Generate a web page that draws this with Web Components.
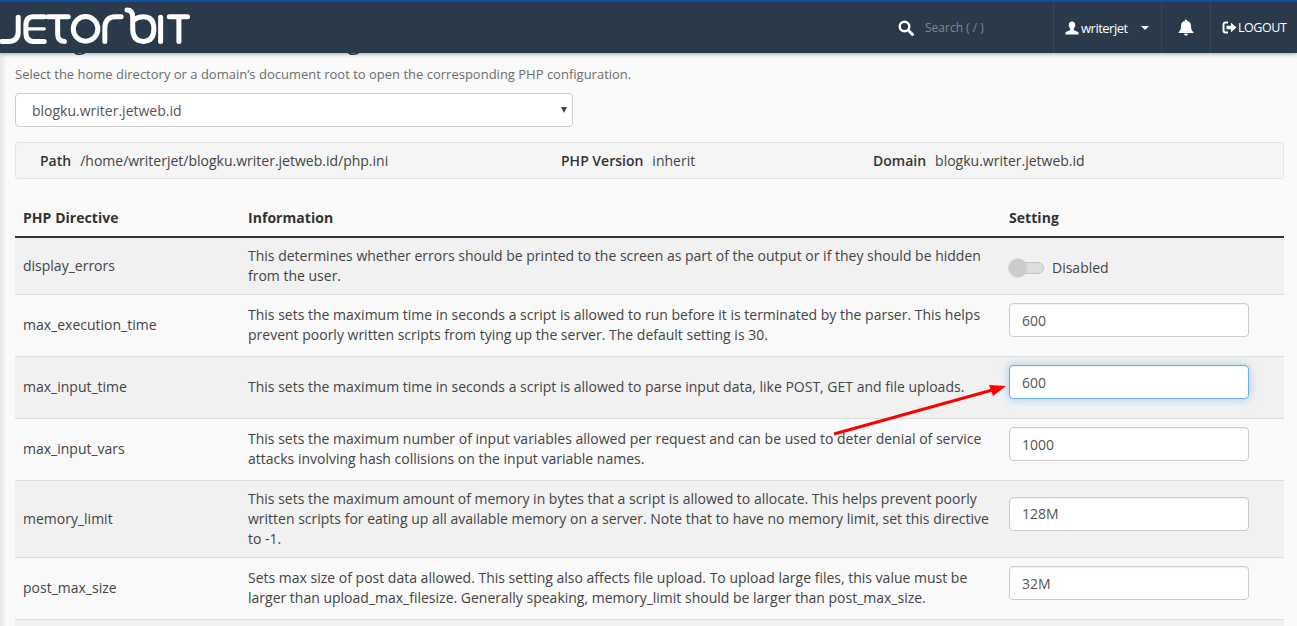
<!DOCTYPE html>
<html lang="en">
<head>
<meta charset="utf-8">
<title>MultiPHP INI Editor</title>
<style>
  html, body { margin: 0; height: 100%; overflow: hidden; }
  body { background: #fafafa; color: #333; font: 14px/20px "Open Sans", "Liberation Sans", sans-serif; }
</style>
</head>
<body>
<template id="jet-header-tpl">
  <style>
    :host {
      display: flex;
      position: relative;
      z-index: 5;
      height: 51px;
      background: #2a3a4b;
      border-top: 2px solid #0c4ea3;
      box-shadow: 0 1px 4px rgba(0, 0, 0, .35);
      color: #fff;
      font-size: 13px;
      align-items: stretch;
    }
    .logo { width: 200px; height: 51px; flex: none; margin-top: -2px; }
    .logo path, .logo circle { fill: none; stroke: #fff; stroke-width: 5.2; stroke-linecap: round; }
    .logo .thin { stroke-width: 3.6; }
    .search { margin-left: auto; width: 155px; display: flex; align-items: center; }
    .search span { margin-left: 11px; font-size: 12px; color: #7d8995; }
    .cell { display: flex; align-items: center; border-left: 1px solid #34465a; }
    .user { width: 108px; padding-left: 11px; box-sizing: border-box; letter-spacing: -.5px; }
    .user span { margin-left: 2px; }
    .caret { width: 0; height: 0; margin-left: 13px; border: 4.500px solid transparent; border-top-color: #fff; border-bottom: 0; }
    .bell { width: 48px; justify-content: center; }
    .logout { width: 87px; padding-left: 11px; box-sizing: border-box; font-size: 12.5px; letter-spacing: -.45px; }
    .logout span { margin-left: 1px; }
  </style>
  <svg class="logo" viewBox="0 0 200 53">
    <path d="M15 18V33Q15 43 5 43H-2"/>
    <path d="M42 17.500H31Q23 17.500 23 26V34Q23 43 31 43H42"/>
    <path class="thin" d="M25 30H42"/>
    <path d="M46 17.500H67M56 18V35Q56 43 63 43"/>
    <circle cx="85" cy="30" r="12.800"/>
    <path d="M105 43V29Q105 17.500 116 17.500H122"/>
    <path d="M128 10.500Q134 10.500 134 18V30Q134 43 145 43Q156 43 156 30Q156 17.500 145 17.500Q139 17.500 135 21"/>
    <path d="M163 18V43"/>
    <path d="M172 17.500H191M182 18V43"/>
  </svg>
  <div class="search">
    <svg width="16" height="16" viewBox="0 0 16 16"><circle cx="6.500" cy="6.500" r="4.800" fill="none" stroke="#fff" stroke-width="2.400"/><path d="M10.200 10.200L14.500 14.500" stroke="#fff" stroke-width="3" stroke-linecap="round"/></svg>
    <span>Search ( / )</span>
  </div>
  <div class="cell user">
    <svg width="14" height="14" viewBox="0 0 14 14"><path fill="#fff" d="M7 .5C9.200.5 10.400 2.200 10.200 4.300 10.100 5.800 9.500 7 8.700 7.700V8.900L13.500 11.200V13.500H.5V11.200L5.300 8.900V7.700C4.500 7 3.900 5.800 3.800 4.300 3.600 2.200 4.800.5 7 .5Z"/></svg>
    <span>writerjet</span>
    <i class="caret"></i>
  </div>
  <div class="cell bell">
    <svg width="16" height="17" viewBox="0 0 16 17"><path fill="#fff" d="M8 .5C8.700.5 9 1 9 1.700 11.500 2.200 13 4.200 13 6.800 13 10 13.500 11.500 15.500 13.300V14H.5V13.300C2.500 11.500 3 10 3 6.800 3 4.200 4.500 2.200 7 1.700 7 1 7.300.5 8 .5ZM6 14.800H10C10 16 9.100 16.600 8 16.600S6 16 6 14.800Z"/></svg>
  </div>
  <div class="cell logout">
    <svg width="15" height="13" viewBox="0 0 15 13"><path fill="none" stroke="#fff" stroke-width="2" d="M6 1.500H3.500Q1.500 1.500 1.500 3.500V9.500Q1.500 11.500 3.500 11.500H6"/><path fill="#fff" d="M4.500 4.700H9V1.800L14.500 6.500 9 11.200V8.300H4.500Z"/></svg>
    <span>LOGOUT</span>
  </div>
</template>

<template id="page-intro-tpl">
  <style>
    :host { display: block; }
    h1 { margin: 0; font-size: 24px; line-height: 30px; font-weight: 400; color: #333; }
    p { margin: 9px 0 9px; font-size: 13px; line-height: 20px; color: #6d6d6d; }
  </style>
  <h1><slot name="title"></slot></h1>
  <p><slot name="lead"></slot></p>
</template>

<template id="domain-select-tpl">
  <style>
    :host { display: block; position: relative; width: 558px; }
    select {
      display: block;
      width: 100%;
      height: 34px;
      padding: 0 24px 0 16px;
      appearance: none;
      background: #fff;
      border: 1px solid #ccc;
      border-radius: 4px;
      color: #555;
      font: 14px "Open Sans", "Liberation Sans", sans-serif;
    }
    .arrow {
      position: absolute;
      right: 6px;
      top: 14px;
      border: 3.500px solid transparent;
      border-top: 6px solid #444;
      border-bottom: 0;
      pointer-events: none;
    }
  </style>
  <select></select>
  <i class="arrow"></i>
</template>

<template id="info-bar-tpl">
  <style>
    :host {
      display: grid;
      grid-template-columns: 521px 312px 1fr;
      margin-top: 15px;
      height: 35px;
      padding-left: 24px;
      align-items: center;
      background: #f5f5f5;
      border: 1px solid #e3e3e3;
      border-radius: 3px;
      color: #444;
    }
  </style>
  <slot></slot>
</template>

<template id="info-item-tpl">
  <style>
    :host { display: flex; gap: 9px; }
    b { font-weight: 600; color: #333; }
  </style>
  <b><slot name="label"></slot></b>
  <span><slot></slot></span>
</template>

<template id="directive-head-tpl">
  <style>
    :host {
      display: grid;
      grid-template-columns: 225px 761px 1fr;
      margin-top: 19px;
      height: 36px;
      padding-top: 2px;
      align-items: center;
      border-bottom: 2px solid #333;
      font-weight: 700;
      color: #333;
      letter-spacing: .05px;
    }
    span { padding-left: 8px; }
  </style>
  <span>PHP Directive</span><span>Information</span><span>Setting</span>
</template>

<template id="directive-row-tpl">
  <style>
    :host {
      display: grid;
      grid-template-columns: 225px 761px 1fr;
      align-items: center;
      border-bottom: 1px solid #ddd;
      color: #444;
    }
    :host(:nth-of-type(odd)) { background: #f1f1f1; }
    :host(:nth-of-type(even)) { background: #f9f9f9; }
    div { padding: 7.500px 8px 8.500px; min-width: 0; }
    .setting { padding: 8px 35px 8px 8px; }
  </style>
  <div><slot name="name"></slot></div>
  <div><slot></slot></div>
  <div class="setting"><slot name="setting"></slot></div>
</template>

<template id="setting-input-tpl">
  <style>
    :host { display: block; padding-bottom: 11px; }
    input {
      display: block;
      box-sizing: border-box;
      width: 100%;
      height: 34px;
      padding: 6px 12px;
      background: #fff;
      border: 1px solid #ccc;
      border-radius: 4px;
      color: #555;
      font: 14px "Open Sans", "Liberation Sans", sans-serif;
      box-shadow: inset 0 1px 1px rgba(0, 0, 0, .05);
      outline: 0;
    }
    :host([focused]) input {
      border-color: #66afe9;
      box-shadow: inset 0 1px 1px rgba(0, 0, 0, .075), 0 0 8px rgba(102, 175, 233, .6);
    }
  </style>
  <input type="text">
</template>

<template id="setting-toggle-tpl">
  <style>
    :host { display: flex; align-items: center; gap: 8px; padding-top: 3px; }
    .track {
      position: relative;
      width: 36px;
      height: 12px;
      box-sizing: border-box;
      margin-left: -1px;
      background: #ddd;
      border: 1px solid #c4c4c4;
      border-radius: 6px;
    }
    .knob {
      position: absolute;
      left: -1px;
      top: -5px;
      width: 20px;
      height: 20px;
      box-sizing: border-box;
      border: 1px solid #dcdcdc;
      border-radius: 50%;
      background: #ccc;
    }
  </style>
  <span class="track"><span class="knob"></span></span>
  <span><slot></slot></span>
</template>

<template id="ini-page-tpl">
  <style>
    :host {
      display: block;
      position: relative;
      height: 100vh;
      overflow: hidden;
      background: linear-gradient(to right, #e6e6e6, #fafafa 7px);
    }
    main { margin-top: -28px; padding: 0 13px 0 15px; }
    .arrow { position: absolute; left: 0; top: 0; z-index: 2; pointer-events: none; }
  </style>
  <slot name="header"></slot>
  <main><slot></slot></main>
  <svg class="arrow" width="1297" height="626" viewBox="0 0 1297 626">
    <path d="M834 434L996 389" stroke="#f00" stroke-width="3"/>
    <path d="M1006 386L989 385 993 396Z" fill="#f00"/>
  </svg>
</template>

<ini-page>
  <jet-header slot="header"></jet-header>
  <page-intro>
    <span slot="title">Configure PHP INI basic settings</span>
    <span slot="lead">Select the home directory or a domain’s document root to open the corresponding PHP configuration.</span>
  </page-intro>
  <domain-select option="blogku.writer.jetweb.id"></domain-select>
  <info-bar>
    <info-item><span slot="label">Path</span>/home/writerjet/blogku.writer.jetweb.id/php.ini</info-item>
    <info-item><span slot="label">PHP Version</span>inherit</info-item>
    <info-item><span slot="label">Domain</span>blogku.writer.jetweb.id</info-item>
  </info-bar>
  <directive-head></directive-head>
  <section id="rows">
    <directive-row>
      <span slot="name">display_errors</span>
      This determines whether errors should be printed to the screen as part of the output or if they should be hidden from the user.
      <setting-toggle slot="setting">Disabled</setting-toggle>
    </directive-row>
    <directive-row>
      <span slot="name">max_execution_time</span>
      This sets the maximum time in seconds a script is allowed to run before it is terminated by the parser. This helps prevent poorly written scripts from tying up the server. The default setting is 30.
      <setting-input slot="setting" value="600"></setting-input>
    </directive-row>
    <directive-row>
      <span slot="name">max_input_time</span>
      This sets the maximum time in seconds a script is allowed to parse input data, like POST, GET and file uploads.
      <setting-input slot="setting" value="600" focused></setting-input>
    </directive-row>
    <directive-row>
      <span slot="name">max_input_vars</span>
      This sets the maximum number of input variables allowed per request and can be used to deter denial of service attacks involving hash collisions on the input variable names.
      <setting-input slot="setting" value="1000"></setting-input>
    </directive-row>
    <directive-row>
      <span slot="name">memory_limit</span>
      This sets the maximum amount of memory in bytes that a script is allowed to allocate. This helps prevent poorly written scripts for eating up all available memory on a server. Note that to have no memory limit, set this directive to -1.
      <setting-input slot="setting" value="128M"></setting-input>
    </directive-row>
    <directive-row>
      <span slot="name">post_max_size</span>
      Sets max size of post data allowed. This setting also affects file upload. To upload large files, this value must be larger than upload_max_filesize. Generally speaking, memory_limit should be larger than post_max_size.
      <setting-input slot="setting" value="32M"></setting-input>
    </directive-row>
    <directive-row></directive-row>
  </section>
</ini-page>

<script>
  class TplElement extends HTMLElement {
    constructor() {
      super();
      const tpl = document.getElementById(this.constructor.tpl);
      this.attachShadow({ mode: "open" }).appendChild(tpl.content.cloneNode(true));
    }
  }

  class DomainSelect extends TplElement {
    static tpl = "domain-select-tpl";
    connectedCallback() {
      const select = this.shadowRoot.querySelector("select");
      select.innerHTML = "";
      select.add(new Option(this.getAttribute("option")));
    }
  }

  class SettingInput extends TplElement {
    static tpl = "setting-input-tpl";
    connectedCallback() {
      this.shadowRoot.querySelector("input").value = this.getAttribute("value");
    }
  }

  const plain = {
    "ini-page": "ini-page-tpl",
    "jet-header": "jet-header-tpl",
    "page-intro": "page-intro-tpl",
    "info-bar": "info-bar-tpl",
    "info-item": "info-item-tpl",
    "directive-head": "directive-head-tpl",
    "directive-row": "directive-row-tpl",
    "setting-toggle": "setting-toggle-tpl",
  };
  for (const [name, id] of Object.entries(plain)) {
    customElements.define(name, class extends TplElement { static tpl = id; });
  }
  customElements.define("domain-select", DomainSelect);
  customElements.define("setting-input", SettingInput);
</script>
</body>
</html>
